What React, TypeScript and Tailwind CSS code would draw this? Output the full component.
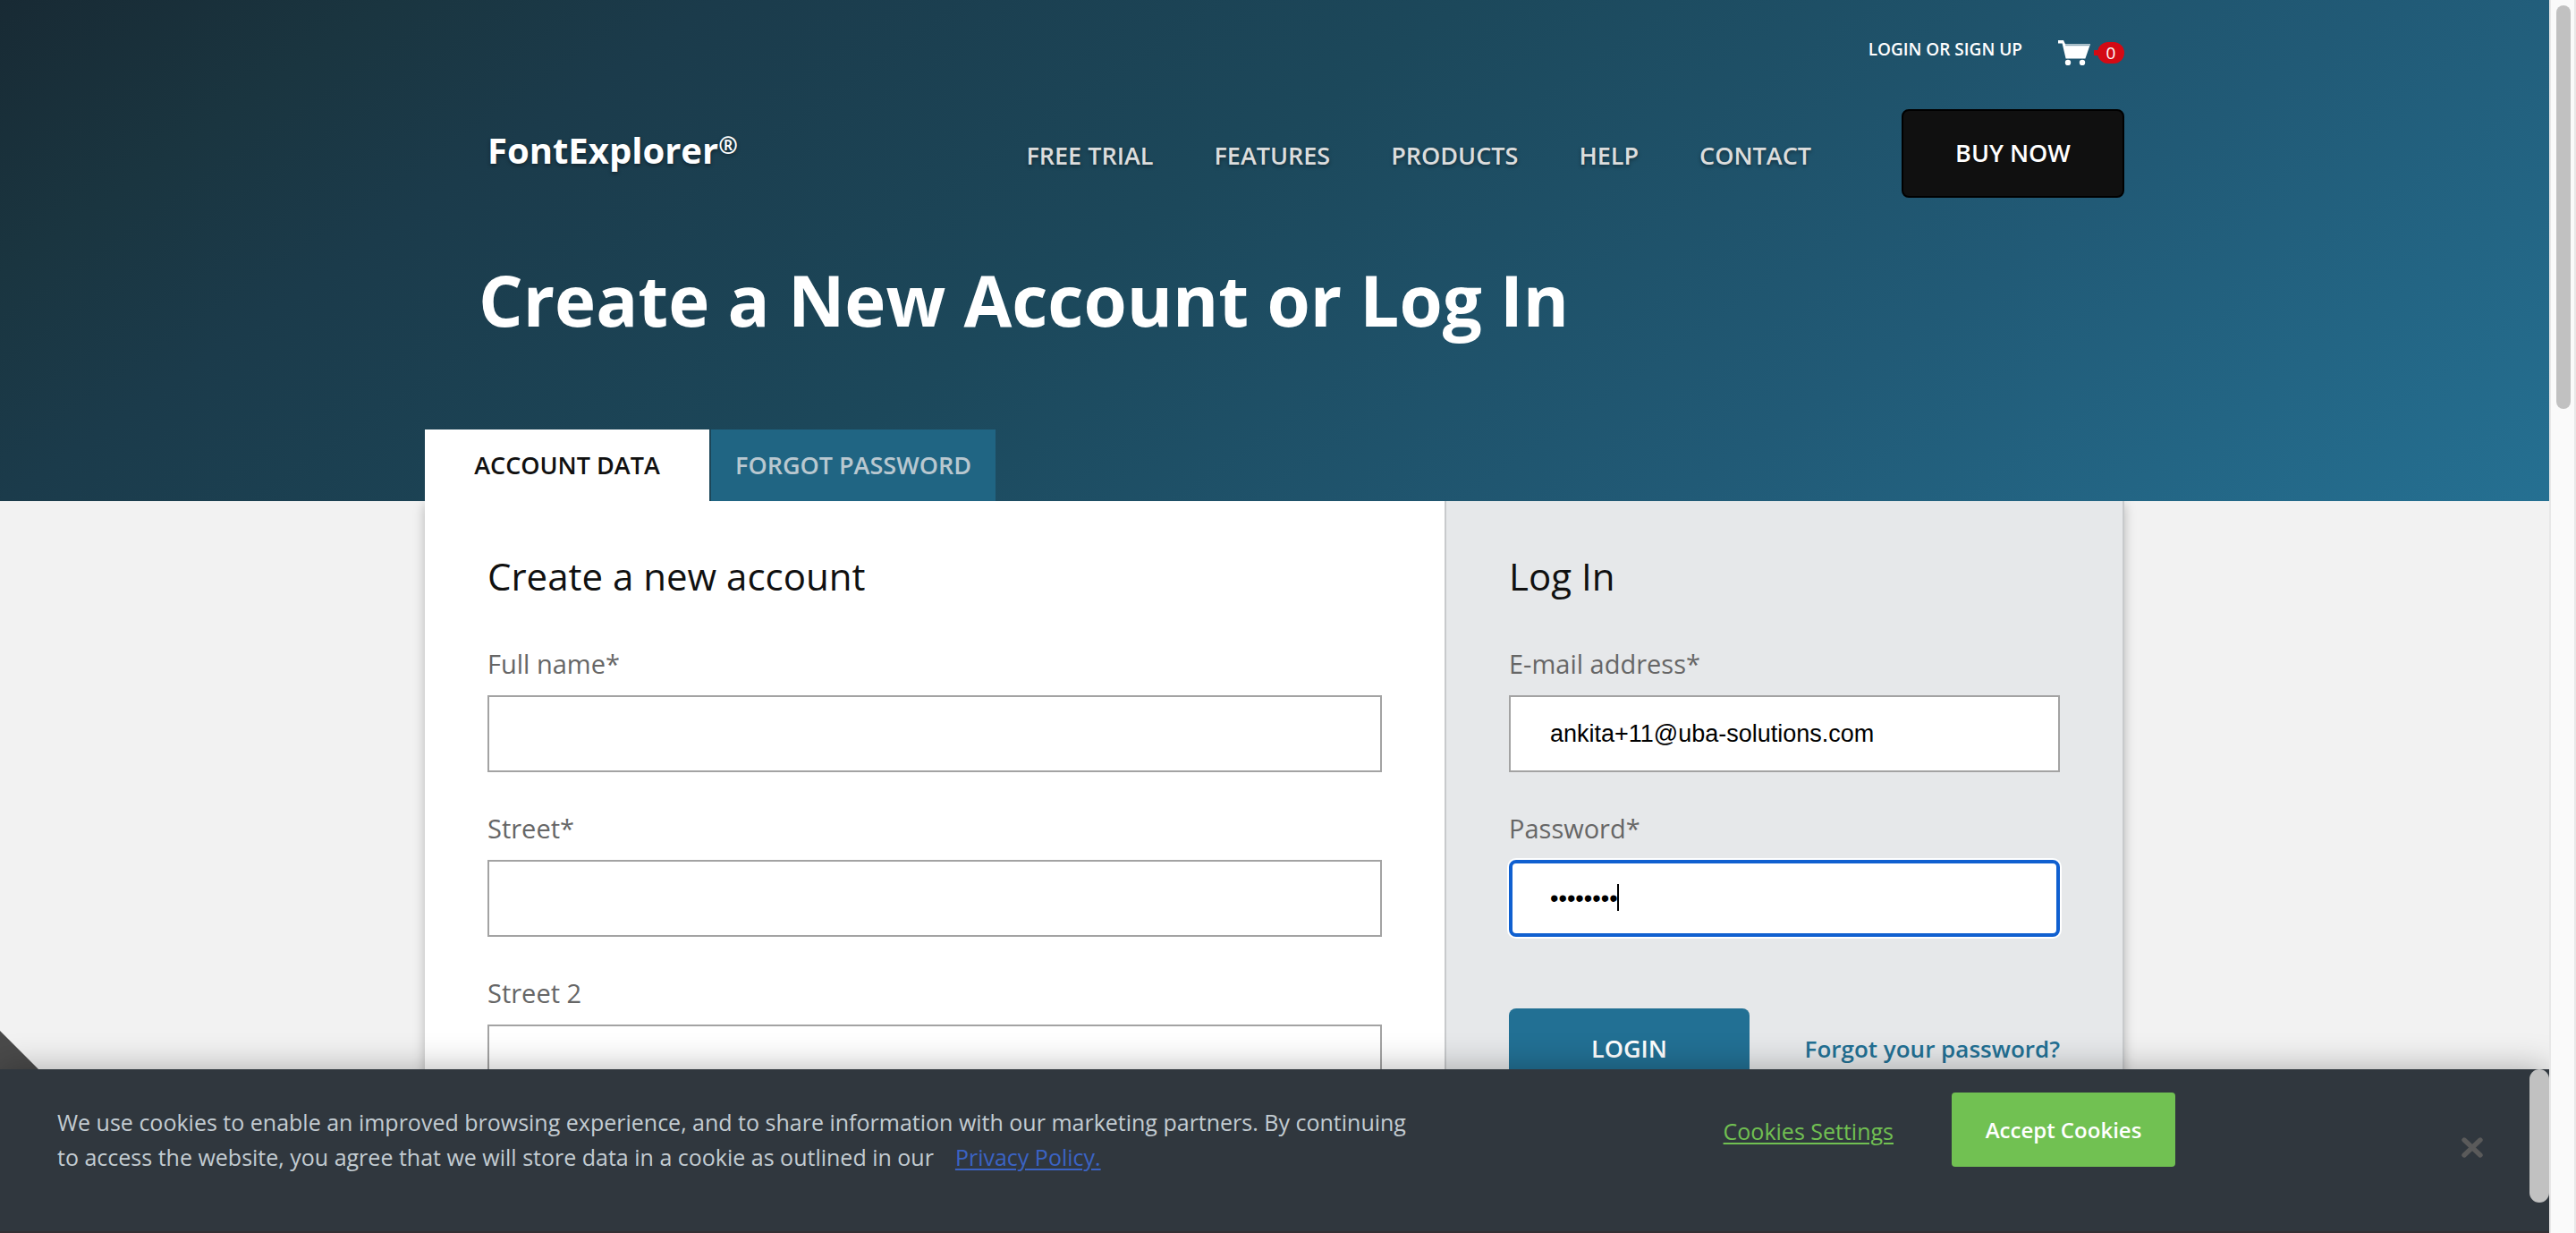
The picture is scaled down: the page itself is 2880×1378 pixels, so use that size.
import React from "react";

const navItems = ["Free Trial", "Features", "Products", "Help", "Contact"];

const accountFields = [
  { id: "full-name", label: "Full name*" },
  { id: "street", label: "Street*" },
  { id: "street-2", label: "Street 2" },
];

function CartIcon() {
  return (
    <svg viewBox="0 0 36 28" className="h-7 w-9" aria-hidden="true">
      <path d="M0 0h6l2 4.2h28l-5.6 16.3H8.6L4.6 3.4H0z" fill="#fff" />
      <path d="M8.2 5.4h27.2" stroke="#8fabb9" strokeWidth="1.6" />
      <circle cx="11" cy="25" r="3.2" fill="#fff" />
      <circle cx="27" cy="25" r="3.2" fill="#fff" />
    </svg>
  );
}

function CartBadge({ count }: { count: number }) {
  return (
    <span className="flex items-center">
      <span className="-mr-2.5 h-1.5 w-3.5 bg-[#d40a14]" />
      <span className="flex h-6 w-[30px] items-center justify-center rounded-full bg-[#d40a14] text-[19px] leading-6">
        {count}
      </span>
    </span>
  );
}

function Header() {
  return (
    <header className="bg-[linear-gradient(145deg,#182a34_0%,#1a3540_12%,#1b3b4b_22%,#1c485b_45%,#215a76_73%,#257092_100%)] text-white">
      <div className="mx-auto max-w-[1900px]">
        <div className="flex h-[110px] items-center justify-end">
          <a href="#login" className="text-[19px] font-semibold leading-6 uppercase">
            Login or sign up
          </a>
          <a href="#cart" aria-label="Cart" className="ml-10 flex items-center gap-1 pt-2">
            <CartIcon />
            <CartBadge count={0} />
          </a>
        </div>

        <div className="mt-3 flex items-center justify-between pl-[70px]">
          <a
            href="#home"
            className="flex items-start pb-2 text-[40px] font-bold leading-[48px] [text-shadow:0_2px_4px_rgba(0,0,0,0.4)]"
          >
            FontExplorer<span className="text-[26px] leading-9">®</span>
          </a>
          <div className="flex items-center gap-[101px]">
            <nav className="flex items-center gap-[68px] pt-1">
              {navItems.map((item) => (
                <a
                  key={item}
                  href={"#" + item.toLowerCase().replace(" ", "-")}
                  className="text-[27px] font-semibold leading-10 text-[#dcdddd] uppercase [text-shadow:0_2px_4px_rgba(0,0,0,0.4)]"
                >
                  {item}
                </a>
              ))}
            </nav>
            <button
              type="button"
              className="h-[99px] w-[249px] rounded-lg border-2 border-black bg-[#101010] text-[27px] font-semibold uppercase"
            >
              Buy now
            </button>
          </div>
        </div>

        <h1 className="mt-16 pl-[60px] text-[78px] font-bold leading-[100px]">
          Create a New Account or Log In
        </h1>

        <div role="tablist" className="mt-[95px] flex gap-0.5">
          <button
            type="button"
            role="tab"
            aria-selected="true"
            className="h-20 w-[318px] bg-white text-[27px] font-semibold text-[#101010] uppercase"
          >
            Account data
          </button>
          <button
            type="button"
            role="tab"
            aria-selected="false"
            className="h-20 w-[318px] bg-[#206583] text-[27px] font-semibold text-[#b9c8d0] uppercase"
          >
            Forgot password
          </button>
        </div>
      </div>
    </header>
  );
}

function AccountForm() {
  return (
    <form className="flex-1 bg-white px-[70px] pt-[54px] pb-20">
      <h2 className="mb-[5px] text-[42px] leading-[60px] text-[#101010]">Create a new account</h2>
      {accountFields.map((field) => (
        <div key={field.id} className="flex flex-col gap-[15px] pt-[43px]">
          <label htmlFor={field.id} className="text-[29px] leading-10 text-[#666]">
            {field.label}
          </label>
          <input
            id={field.id}
            type="text"
            className="h-[86px] w-full border-2 border-[#a3a3a3] bg-white px-11 text-[27px] outline-none"
          />
        </div>
      ))}
    </form>
  );
}

function LoginForm() {
  return (
    <form className="w-2/5 border-x-2 border-[#c8cacc] bg-[#e6e8ea] px-[70px] pt-[54px]">
      <h2 className="mb-[5px] text-[42px] leading-[60px] text-[#101010]">Log In</h2>
      <div className="flex flex-col gap-[15px] pt-[43px]">
        <label htmlFor="email" className="text-[29px] leading-10 text-[#666]">
          E-mail address*
        </label>
        <input
          id="email"
          type="email"
          defaultValue="ankita+11@uba-solutions.com"
          className="h-[86px] w-full border-2 border-[#a3a3a3] bg-white px-11 font-['Liberation_Sans',sans-serif] text-[27px] text-black outline-none"
        />
      </div>
      <div className="flex flex-col gap-[15px] pt-[43px]">
        <label htmlFor="password" className="text-[29px] leading-10 text-[#666]">
          Password*
        </label>
        <div className="relative">
          <input
            id="password"
            type="password"
            defaultValue="password"
            className="h-[86px] w-full rounded-lg border-4 border-[#1060d0] bg-white px-[42px] font-['Liberation_Sans',sans-serif] text-[27px] text-black ring-2 ring-white outline-none"
          />
          <span className="absolute top-[27px] left-[121px] h-[30px] w-0.5 bg-black" />
        </div>
      </div>
      <div className="flex items-center justify-between pt-20">
        <button
          type="submit"
          className="h-[90px] w-[269px] rounded-lg bg-[#227094] text-[27px] font-semibold text-white uppercase"
        >
          Login
        </button>
        <a href="#forgot" className="text-[26px] font-semibold leading-10 text-[#227094]">
          Forgot your password?
        </a>
      </div>
    </form>
  );
}

function CookieBanner() {
  return (
    <section
      aria-label="Cookie notice"
      className="absolute inset-x-0 bottom-0 flex h-[183px] items-start border-b-2 border-[#332f33] bg-[#30373e] shadow-[0_0_36px_rgba(0,0,0,0.3)]"
    >
      <div className="mt-10 ml-16 text-[25px] leading-[39px] text-[#c3ccd2]">
        <p>
          We use cookies to enable an improved browsing experience, and to share information with
          our marketing partners. By continuing
        </p>
        <div className="flex gap-6">
          <p>to access the website, you agree that we will store data in a cookie as outlined in our</p>
          <a
            href="#privacy"
            className="text-[#3b63c4] underline decoration-2 underline-offset-[3px]"
          >
            Privacy Policy.
          </a>
        </div>
      </div>
      <div className="ml-auto flex items-start">
        <button
          type="button"
          className="mt-[49px] text-[25px] leading-10 text-[#71c052] underline decoration-2 underline-offset-[3px]"
        >
          Cookies Settings
        </button>
        <button
          type="button"
          className="mt-[26px] ml-[65px] h-[83px] w-[250px] rounded bg-[#71c152] text-[24px] font-semibold text-white"
        >
          Accept Cookies
        </button>
        <button type="button" aria-label="Close" className="mt-[76px] ml-80">
          <svg viewBox="0 0 24 23" className="h-[23px] w-6" aria-hidden="true">
            <path
              d="M3 3l18 17M21 3L3 20"
              stroke="#5a5a5a"
              strokeWidth="5.4"
              strokeLinecap="round"
            />
          </svg>
        </button>
        <div className="ml-[52px] h-[149px] w-[22px] rounded-full bg-[#c1c1c1]" />
      </div>
    </section>
  );
}

export default function App() {
  return (
    <div className="flex h-screen overflow-hidden bg-[#f2f2f2] font-['Open_Sans',sans-serif]">
      <div className="relative min-w-0 flex-1 overflow-hidden">
        <Header />
        <div className="overflow-hidden">
          <main className="mx-auto flex max-w-[1900px] shadow-[0_4px_12px_rgba(0,0,0,0.25)]">
            <AccountForm />
            <LoginForm />
          </main>
        </div>
        <div className="absolute bottom-0 left-0 h-[226px] w-[226px] bg-[#4a4a4a] [clip-path:polygon(0_0,100%_100%,0_100%)]" />
        <CookieBanner />
      </div>
      <div className="w-[30px] border-x-2 border-[#e8e8e8] bg-[#fafafa] px-1.5 pt-1.5">
        <div className="h-[451px] w-4 rounded-full bg-[#c1c1c1]" />
      </div>
    </div>
  );
}
